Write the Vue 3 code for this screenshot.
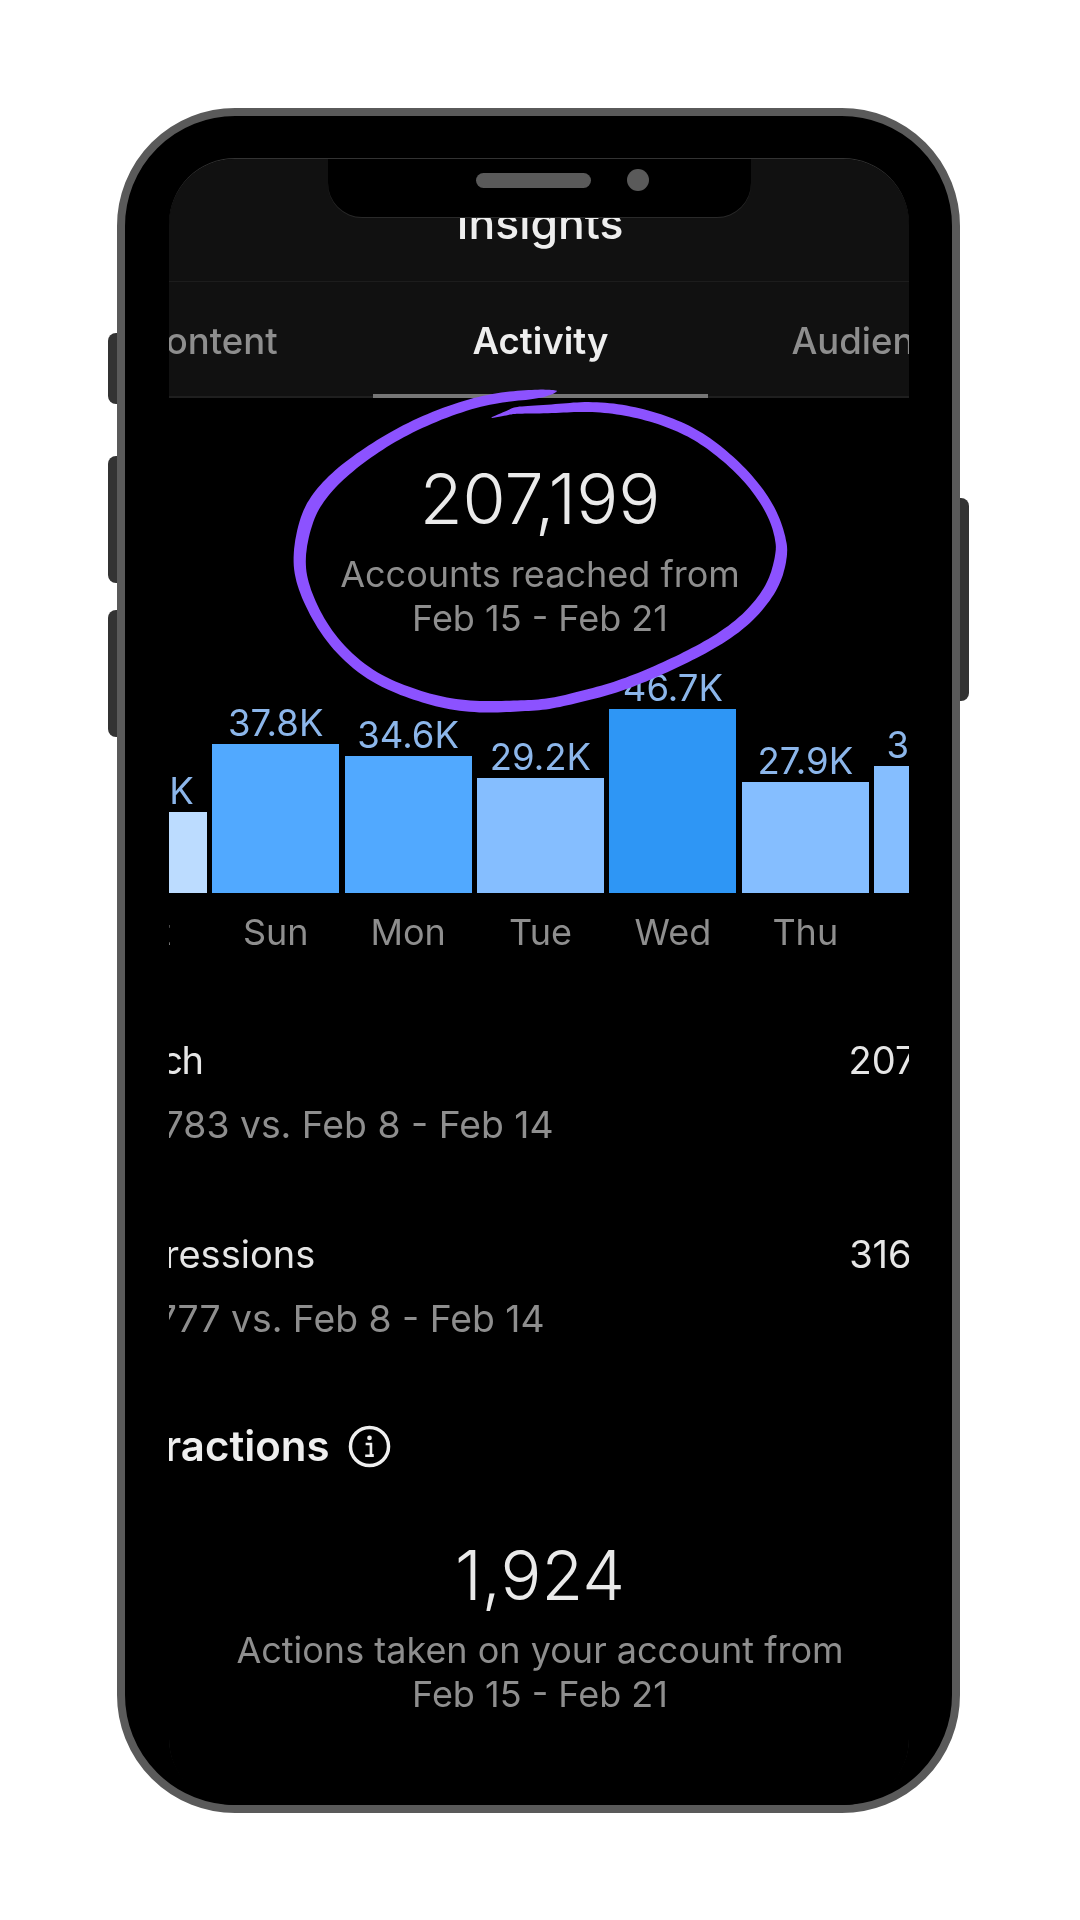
<script setup>
const days = [
  { d: 'Sat', v: '20.6K', h: 81, c: '#bcdcff' },
  { d: 'Sun', v: '37.8K', h: 149, c: '#51a9ff' },
  { d: 'Mon', v: '34.6K', h: 137, c: '#51a9ff' },
  { d: 'Tue', v: '29.2K', h: 115, c: '#85beff' },
  { d: 'Wed', v: '46.7K', h: 184, c: '#2e96f5' },
  { d: 'Thu', v: '27.9K', h: 111, c: '#85beff' },
  { d: 'Fri', v: '32.2K', h: 127, c: '#85beff' }
]
const rows = [
  { l: 'Reach', v: '207,199', s: '-13,783 vs. Feb 8 - Feb 14' },
  { l: 'Impressions', v: '316,104', s: '-11,777 vs. Feb 8 - Feb 14' }
]
// hand-drawn circle: centre line [x, y, width] in thirds of a pixel, traced from the stroke
const raw = [[830,33,3],[795,40,24],[715,47,30],[615,60,30],[495,97,32],[375,150,32],[275,210,34],[185,277,37],[120,345,40],[80,415,40],[57,525,37],[67,610,35],[110,710,32],[180,810,32],[285,895,32],[395,940,32],[495,970,33],[615,982,35],[715,977,33],[795,974,32],[880,955,32],[980,930,33],[1080,895,33],[1180,850,33],[1280,800,33],[1380,735,35],[1450,660,35],[1490,590,37],[1505,515,35],[1502,485,32],[1485,415,30],[1430,325,30],[1360,250,30],[1280,185,31],[1200,140,31],[1100,105,31],[1000,85,31],[900,80,29],[820,87,26],[715,90,22],[695,95,16],[635,113,3]]
function smooth(list) {
  return list.map((_, i) => {
    const w = Math.min(i, list.length - 1 - i, 5)
    const out = [0, 0, 0]
    for (let k = i - w; k <= i + w; k++) list[k].forEach((v, j) => { out[j] += v / (2 * w + 1) })
    return out
  })
}
function strokePath(pts) {
  const p = pts.map(a => a.map(n => n / 3))
  let smp = []
  for (let i = 0; i < p.length - 1; i++) {
    const a = p[Math.max(i - 1, 0)], b = p[i], c = p[i + 1], d = p[Math.min(i + 2, p.length - 1)]
    for (let k = 0; k < 8; k++) {
      const t = k / 8
      smp.push([0, 1, 2].map(j => 0.5 * (2 * b[j] + (c[j] - a[j]) * t + (2 * a[j] - 5 * b[j] + 4 * c[j] - d[j]) * t * t + (3 * b[j] - a[j] - 3 * c[j] + d[j]) * t * t * t)))
    }
  }
  smp.push(p[p.length - 1])
  smp = smooth(smp)
  const L = [], R = []
  smp.forEach((s, i) => {
    const a = smp[Math.max(i - 1, 0)], b = smp[Math.min(i + 1, smp.length - 1)]
    const dx = b[0] - a[0], dy = b[1] - a[1], n = Math.hypot(dx, dy) || 1
    const ox = -dy / n * s[2] / 2, oy = dx / n * s[2] / 2
    L.push((s[0] + ox).toFixed(1) + ' ' + (s[1] + oy).toFixed(1))
    R.unshift((s[0] - ox).toFixed(1) + ' ' + (s[1] - oy).toFixed(1))
  })
  return 'M' + L.concat(R).join('L') + 'Z'
}
const circle = strokePath(raw)
</script>

<template>
  <div class="page">
    <div class="phone">
      <span class="btn b1"></span>
      <span class="btn b2"></span>
      <span class="btn b3"></span>
      <span class="btn b4"></span>
      <div class="screen">
        <header class="head">
          <div class="title"><span>Insights</span></div>
          <nav class="tabs">
            <span class="tab t1">Content</span>
            <span class="tab on">Activity</span>
            <span class="tab">Audience</span>
          </nav>
        </header>

        <section class="hero first">
          <div class="big">207,199</div>
          <p class="cap">Accounts reached from<br>Feb 15 - Feb 21</p>
        </section>

        <div class="chart">
          <div v-for="x in days" :key="x.d" class="col">
            <span class="val">{{ x.v }}</span>
            <span class="bar" :style="{ height: x.h + 'px', background: x.c }"></span>
            <span class="day">{{ x.d }}</span>
          </div>
        </div>

        <div class="rows">
          <div v-for="r in rows" :key="r.l" class="row">
            <div class="line"><span class="lab">{{ r.l }}</span><span>{{ r.v }}</span></div>
            <div class="sub">{{ r.s }}</div>
          </div>
          <div class="sect">
            <span>Interactions</span>
            <svg class="info" viewBox="0 0 42 42" width="43" height="43" aria-hidden="true">
              <circle cx="21" cy="21" r="18.6" fill="none" stroke="#efefef" stroke-width="3.4" />
              <circle cx="21" cy="12.6" r="2.3" fill="#efefef" />
              <path d="M17.2 18.6h5.2v11h2.6M16.8 30h8.4" fill="none" stroke="#efefef" stroke-width="2.6" />
            </svg>
          </div>
        </div>

        <section class="hero second">
          <div class="big">1,924</div>
          <p class="cap">Actions taken on your account from<br>Feb 15 - Feb 21</p>
        </section>
      </div>

      <div class="notch">
        <span class="speaker"></span>
        <span class="cam"></span>
      </div>

      <svg class="ring" width="540" height="350" viewBox="0 0 540 350" aria-hidden="true">
        <path :d="circle" fill="#8c52ff" />
      </svg>
    </div>
  </div>
</template>

<style>
html, body { margin: 0; background: #fff; }
</style>

<style scoped>
.page {
  width: 1080px;
  height: 1920px;
  box-sizing: border-box;
  padding: 108px 0 0 117px;
  background: #fff;
  font-family: Inter, "Liberation Sans", sans-serif;
  overflow: hidden;
}
.phone {
  position: relative;
  width: 843px;
  height: 1705px;
  box-sizing: border-box;
  padding: 43px 43px 0 44px;
  background: #000;
  border: 8px solid #5a5a5a;
  border-radius: 118px;
}
.btn {
  position: absolute;
  background: #333;
}
.b1, .b2, .b3 {
  left: -17px;
  width: 9px;
  border-radius: 8px 0 0 8px;
}
.b1 { top: 217px; height: 71px; }
.b2 { top: 340px; height: 127px; }
.b3 { top: 494px; height: 127px; }
.b4 {
  right: -17px;
  top: 382px;
  width: 9px;
  height: 203px;
  border-radius: 0 8px 8px 0;
}
.screen {
  width: 740px;
  height: 1646px;
  border-radius: 66px;
  overflow: hidden;
  background: #000;
  box-shadow: 0 -1px 0 #333;
  filter: blur(0.6px);
}
.head {
  background: #111;
}
.title {
  height: 123px;
  box-sizing: border-box;
  border-bottom: 1px solid #1d1d1d;
  text-align: center;
  padding: 40px 0 0 2px;
  color: #eee;
  font-size: 44.5px;
  font-weight: 500;
  line-height: 48px;
}
.tabs {
  position: relative;
  height: 116px;
  box-sizing: border-box;
  display: grid;
  grid-template-columns: minmax(0, 1fr) auto minmax(0, 1fr);
  column-gap: 183px;
  border-bottom: 2px solid #1f1f1f;
  padding: 36px 0 0 3px;
  font-size: 36.5px;
  font-weight: 500;
  line-height: 46px;
  color: #8e8e8e;
  white-space: nowrap;
}
.tab.t1 {
  justify-self: end;
  margin-right: 12px;
}
.tab.on {
  color: #eee;
  font-weight: 600;
}
.tab.on::after {
  content: "";
  position: absolute;
  left: 204px;
  bottom: -2px;
  width: 335px;
  height: 4px;
  background: #777;
}
.hero {
  text-align: center;
  padding-left: 2px;
}
.first {
  padding-top: 60px;
}
.first .big {
  font-size: 70px;
}
.big {
  font-size: 68px;
  font-weight: 300;
  line-height: 82px;
  color: #eaeaea;
}
.cap {
  margin: 12px 0 0;
  font-size: 36px;
  line-height: 44px;
  color: #8e8e8e;
  white-space: nowrap;
}
.chart {
  display: flex;
  justify-content: center;
  gap: 5.4px;
  height: 380px;
  align-items: flex-end;
  margin: -68px 0 0 3px;
}
.col {
  flex: none;
  width: 127px;
  display: flex;
  flex-direction: column;
  align-items: center;
}
.val {
  padding-bottom: 1px;
  font-size: 36.5px;
  line-height: 40px;
  color: #8cb6ea;
  white-space: nowrap;
}
.bar {
  align-self: stretch;
  display: block;
}
.day {
  margin-top: 19px;
  font-size: 36px;
  line-height: 40px;
  color: #8e8e8e;
}
.rows {
  margin: 86px -73px 0 -71px;
  color: #e6e6e6;
  font-size: 38px;
}
.row {
  height: 194px;
}
.row:first-child .lab {
  letter-spacing: -1.5px;
}
.line {
  display: flex;
  justify-content: space-between;
  line-height: 44px;
}
.sub {
  margin-top: 21px;
  line-height: 44px;
  color: #8e8e8e;
  font-size: 37.3px;
}
.sect {
  display: flex;
  align-items: center;
  gap: 18px;
  margin: -3px 0 0 -10px;
  font-size: 42px;
  font-weight: 600;
  line-height: 46px;
  color: #eee;
}
.second {
  padding-top: 65px;
}
.notch {
  position: absolute;
  left: 203px;
  top: 43px;
  width: 423px;
  height: 58px;
  background: #000;
  border-radius: 0 0 34px 34px;
  box-shadow: 0 1px 0 #2a2a2a;
}
.speaker {
  position: absolute;
  left: 148px;
  top: 14px;
  width: 115px;
  height: 15px;
  border-radius: 8px;
  background: #5a5a5a;
}
.cam {
  position: absolute;
  left: 299px;
  top: 10px;
  width: 22px;
  height: 22px;
  border-radius: 50%;
  background: #5a5a5a;
}
.ring {
  position: absolute;
  left: 155px;
  top: 264px;
  pointer-events: none;
}
</style>
